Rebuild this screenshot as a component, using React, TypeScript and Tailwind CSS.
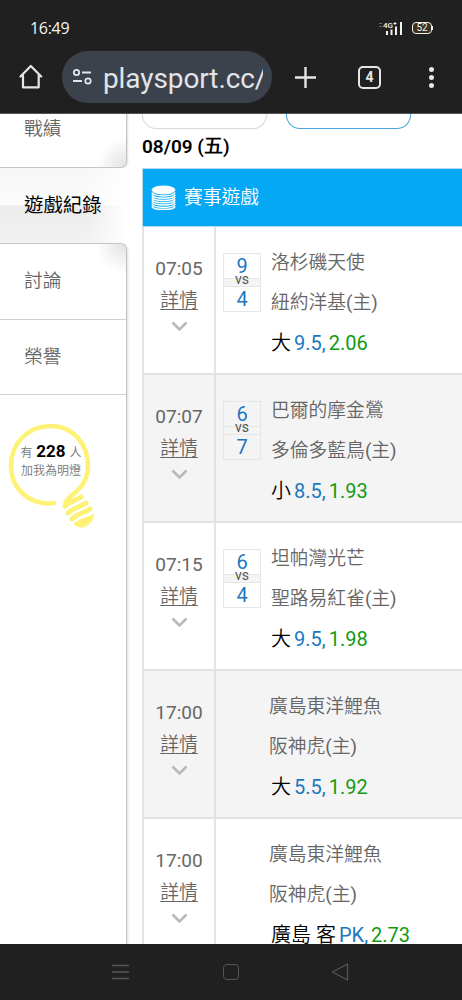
import { clsx } from 'clsx'

type Game = {
    time: string
    score?: [number, number]
    away: string
    home: string
    pick: string
    line: string
    odds: string
}

const games: Game[] = [
    { time: '07:05', score: [9, 4], away: '洛杉磯天使', home: '紐約洋基(主)', pick: '大', line: '9.5,', odds: '2.06' },
    { time: '07:07', score: [6, 7], away: '巴爾的摩金鶯', home: '多倫多藍鳥(主)', pick: '小', line: '8.5,', odds: '1.93' },
    { time: '07:15', score: [6, 4], away: '坦帕灣光芒', home: '聖路易紅雀(主)', pick: '大', line: '9.5,', odds: '1.98' },
    { time: '17:00', away: '廣島東洋鯉魚', home: '阪神虎(主)', pick: '大', line: '5.5,', odds: '1.92' },
    { time: '17:00', away: '廣島東洋鯉魚', home: '阪神虎(主)', pick: '廣島 客', line: 'PK,', odds: '2.73' },
]

function StatusBar() {
    return (
        <div className="flex h-[51px] items-center justify-between pt-[5px] pr-[29px] pl-[30px]">
            <span className="font-['Open_Sans'] text-[16px] leading-[20px] tracking-[-0.3px] text-[#f4f4f4]">16:49</span>
            <div className="flex items-center gap-[8px]">
                <svg width="26" height="14" viewBox="0 0 26 14" fill="#f2f2f2">
                    <path d="M1 2h3v1H1zM1 5h3v1H1z" opacity=".35" />
                    <text x="5" y="6.5" fontSize="8" fontWeight="500" fontFamily="Roboto, sans-serif">4G</text>
                    <path d="M15.500 2.500h3M17 1v3" stroke="#f2f2f2" />
                    <path d="M8 10h2v4H8zM12.500 8.500h2V14h-2zM17 5.500h2V14h-2zM22 1h2v13h-2z" />
                </svg>
                <div className="flex items-center">
                    <div className="flex h-[12px] w-[20px] items-center justify-center rounded-[4px] border-[1.500px] border-[#f2f0e8] bg-[#3a3126] font-['Roboto'] text-[10px] leading-none text-[#f2f0e8]">52</div>
                    <div className="h-[4px] w-px bg-[#f2f0e8]" />
                </div>
            </div>
        </div>
    )
}

function Toolbar() {
    return (
        <div className="flex h-[52px] items-center">
            <svg className="ml-[19px]" width="24" height="26" viewBox="0 0 24 26" fill="none" stroke="#e6e6e6" strokeWidth="2.2" strokeLinejoin="round" strokeLinecap="round">
                <path d="M1.500 12.500 11.800 2l10.400 10.500M4 11v12.300h15.700V11" />
            </svg>
            <div className="ml-[19px] flex h-[52px] w-[210px] items-center overflow-hidden rounded-full bg-[#3c424b] pr-[9px] pl-[10px]">
                <svg className="shrink-0" width="21" height="18" viewBox="0 0 21 18" fill="none" stroke="#e2e4e8" strokeWidth="1.8">
                    <circle cx="4.500" cy="4.500" r="2.700" />
                    <circle cx="16" cy="13" r="2.700" />
                    <path d="M10 4.500h9M1 13h9" />
                </svg>
                <span className="ml-[10px] overflow-hidden pt-[3px] font-['Roboto'] text-[28px] leading-[36px] tracking-[-0.1px] whitespace-nowrap text-[#e2e4e8]">playsport.cc/</span>
            </div>
            <svg className="ml-[23px]" width="21" height="21" viewBox="0 0 21 21" stroke="#e6e6e6" strokeWidth="2.400">
                <path d="M10.500 0v21M0 10.500h21" />
            </svg>
            <div className="ml-[42px] flex size-[23px] items-center justify-center rounded-[5px] border-2 border-[#e6e6e6] font-['Roboto'] text-[14px] leading-none font-bold text-[#e6e6e6]">4</div>
            <div className="ml-[48px] flex flex-col gap-[3px]">
                <i className="size-[5px] rounded-full bg-[#e6e6e6]" />
                <i className="size-[5px] rounded-full bg-[#e6e6e6]" />
                <i className="size-[5px] rounded-full bg-[#e6e6e6]" />
            </div>
        </div>
    )
}

function Lamp() {
    return (
        <div className="relative mt-[28px] ml-[8px] h-[108px] w-[90px]">
            <svg className="absolute inset-0" width="90" height="108" viewBox="0 0 90 108" fill="none" stroke="#fdf276" strokeLinecap="round">
                <path d="M46 80C22 83 3 66 3 43 3 19 21 3 43 3c22 0 37 18 37 40 0 11-4 18-10 24-8 7-13 10-13 16" strokeWidth="4.500" />
                <path d="M57 83C62 78 67 78 73 74M60 90C66 84 73 84 78 80M64 96C70 90 77 90 82 86" strokeWidth="5" />
                <path d="M67 101C72 96 78 96 85 92 84 99 77 105 70 103Z" fill="#fdf276" strokeWidth="2" />
            </svg>
            <div className="relative pt-[19px] pr-[4px] text-center text-[12px] leading-[18px] whitespace-nowrap text-[#777]">
                <p>有 <b className="mx-px text-[17px] font-bold text-black">228</b> 人</p>
                <p>加我為明燈</p>
            </div>
        </div>
    )
}

function Sidebar() {
    return (
        <aside className="w-[142px] shrink-0 text-[18.700px] text-[#666]">
            <div className="flex h-[54px] w-[127px] items-start rounded-br-[6px] border-r border-b border-[#c4c4c4] bg-[radial-gradient(circle_at_100%_100%,#e2e2e2_0,#fff_30px)] pt-px pl-[24px] leading-[28px] shadow-[1px_0_2px_#ddd]">戰績</div>
            <div className="relative flex h-[75px] w-[142px] items-center bg-[linear-gradient(90deg,transparent_60%,#fff_90%),linear-gradient(#f6f6f6,#fcfcfc_49%,#ebebeb_51%,#f2f2f2)] pb-[3px] pl-[24px] font-['Noto_Sans_CJK_TC'] text-[19.400px] font-normal text-black">遊戲紀錄</div>
            <div className="h-[701px] w-[127px] rounded-tr-[6px] border-t border-r border-[#c4c4c4] bg-[radial-gradient(circle_at_100%_0,#e2e2e2_0,#fff_30px)] shadow-[1px_2px_3px_#ddd]">
                <div className="flex h-[76px] items-center border-b border-[#d0d0d0] pl-[24px]">討論</div>
                <div className="flex h-[75px] items-center border-b border-[#d0d0d0] pl-[24px]">榮譽</div>
                <Lamp />
            </div>
        </aside>
    )
}

function GameRow({ game, shaded }: { game: Game; shaded: boolean }) {
    return (
        <div className={clsx('flex h-[148px] border-b-2 border-l-2 border-[#e2e2e2] text-[18.800px] text-[#666]', shaded ? 'bg-[#f4f4f4]' : 'bg-white')}>
            <div className="flex w-[72px] shrink-0 flex-col items-center border-r-2 border-[#e2e2e2] pt-[27px]">
                <span className="text-[19px] leading-[30px]">{game.time}</span>
                <a className="mt-px leading-[32px] underline decoration-1 underline-offset-[2px]">詳情</a>
                <svg className="mt-[4px]" width="17" height="11" viewBox="0 0 17 11" fill="none" stroke="#b8b8b8" strokeWidth="2.600">
                    <path d="M1.500 1.500 8.500 8.500l7-7" />
                </svg>
            </div>
            <div className="w-[55px] shrink-0 pt-[26px] pl-[7px]">
                {game.score && (
                    <div className="flex h-[59px] w-[38px] flex-col items-center border border-[#e6e6e6] text-[20px] text-[#1c78be]">
                        <span className="h-[24px] leading-[25px]">{game.score[0]}</span>
                        <span className="h-[9px] w-full border-y border-[#e6e6e6] bg-[#f4f4f4] text-center text-[14px] leading-px text-[#555]">vs</span>
                        <span className="h-[24px] leading-[25px]">{game.score[1]}</span>
                    </div>
                )}
            </div>
            <div className="pt-[17px] whitespace-nowrap">
                <p className={clsx('leading-[39px]', !game.score && '-ml-[2px]')}>{game.away}</p>
                <p className={clsx('leading-[40px]', !game.score && '-ml-[2px]')}>{game.home}</p>
                <p className="flex gap-[3px] text-[20px] leading-[40px]">
                    <span className="text-black">{game.pick}</span>
                    <span className="text-[#1c78be]">{game.line}</span>
                    <span className="text-[#129a12]">{game.odds}</span>
                </p>
            </div>
        </div>
    )
}

function SystemNav() {
    return (
        <nav className="flex h-[56px] items-center bg-[#202020]">
            <svg className="ml-[112px]" width="17" height="16" stroke="#555" strokeWidth="1.300">
                <path d="M0 1.500h17M0 8h17M0 14.500h17" />
            </svg>
            <div className="ml-[94px] size-[16px] rounded-[4px] border border-[#555]" />
            <svg className="ml-[92px]" width="18" height="18" fill="none" stroke="#555" strokeWidth="1.300" strokeLinejoin="round">
                <path d="M1.500 9 16.500 1v16z" />
            </svg>
        </nav>
    )
}

export default function App() {
    return (
        <div className="flex h-[1000px] w-[462px] flex-col overflow-hidden bg-white font-['Roboto','Noto_Sans_CJK_TC_DemiLight','Noto_Sans_CJK_TC',sans-serif]">
            <header className="h-[114px] shrink-0 border-b border-[#555] bg-[#202020]">
                <StatusBar />
                <Toolbar />
            </header>
            <div className="flex min-h-0 flex-1 overflow-hidden">
                <Sidebar />
                <main className="min-w-0 flex-1">
                    <div className="flex gap-[19px]">
                        <div className="h-[15px] w-[125px] rounded-b-[14px] border border-t-0 border-[#d8d8d8]" />
                        <div className="h-[15px] w-[125px] rounded-b-[14px] border border-t-0 border-[#45a5dc]" />
                    </div>
                    <h2 className="h-[39px] text-[19px] leading-[36px] font-semibold text-black">08/09 (五)</h2>
                    <div className="flex h-[59px] items-center border-y border-l border-[#b5dcf0] bg-[#04a8f5] pl-[8px] text-[18.800px] text-white">
                        <svg className="mr-[8px]" width="25" height="25" viewBox="0 0 25 25" fill="none" stroke="white">
                            <ellipse cx="12.500" cy="5" rx="11.500" ry="4" fill="white" />
                            <path d="M.8 7.500C3 12 22 12 24.200 7.500M.8 9.800C3 14.300 22 14.300 24.200 9.800M.8 12.100C3 16.600 22 16.600 24.200 12.100M.8 14.400C3 18.900 22 18.900 24.200 14.400M.8 16.700C3 21.200 22 21.200 24.200 16.700M.8 19C3 23.500 22 23.500 24.200 19M.8 21.300C3 25.500 22 25.500 24.200 21.300" strokeWidth="1.500" />
                        </svg>
                        <span className="leading-[28px]">賽事遊戲</span>
                    </div>
                    {games.map((game, i) => (
                        <GameRow key={i} game={game} shaded={i % 2 === 1} />
                    ))}
                </main>
            </div>
            <SystemNav />
        </div>
    )
}
